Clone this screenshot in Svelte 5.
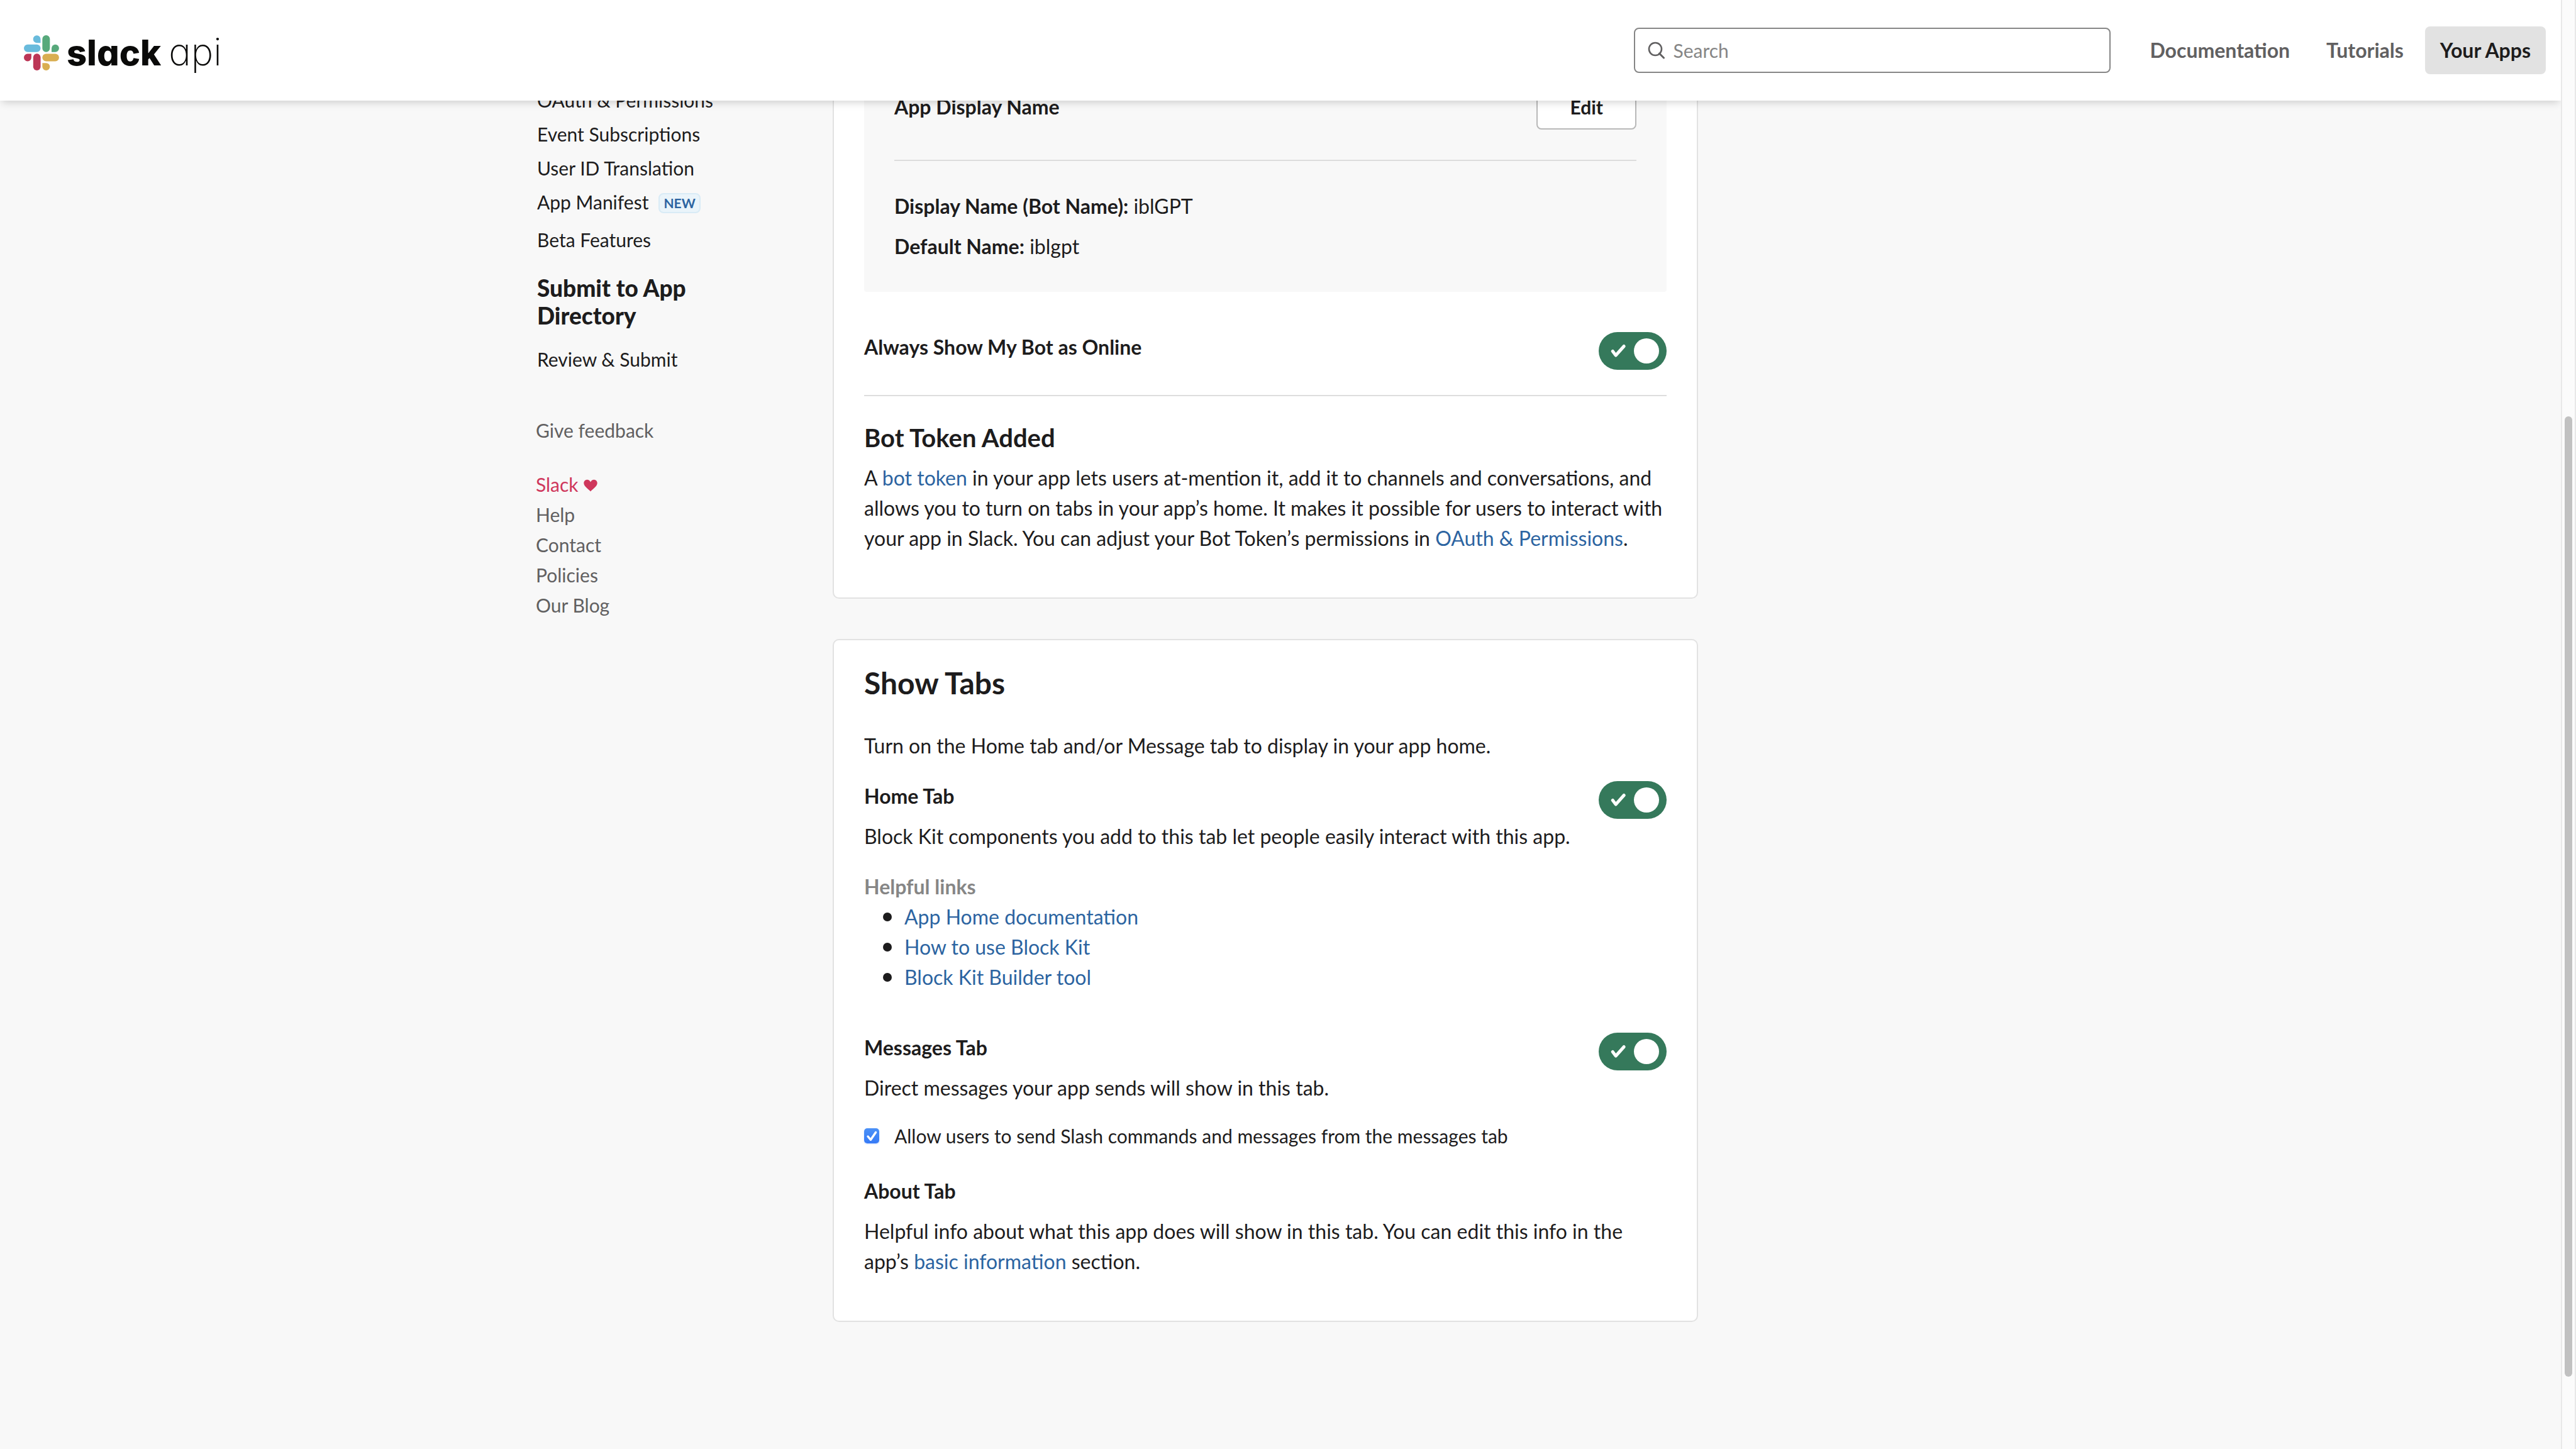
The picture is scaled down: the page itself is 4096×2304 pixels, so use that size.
<script>
  const navLinks = ['Documentation', 'Tutorials'];
  const featureLinks = [
    { label: 'OAuth & Permissions' },
    { label: 'Event Subscriptions' },
    { label: 'User ID Translation' },
    { label: 'App Manifest', badge: 'NEW' },
    { label: 'Beta Features' }
  ];
  const footerLinks = ['Help', 'Contact', 'Policies', 'Our Blog'];
  const helpfulLinks = ['App Home documentation', 'How to use Block Kit', 'Block Kit Builder tool'];

  let query = $state('');
  let online = $state(true);
  let homeTab = $state(true);
  let messagesTab = $state(true);
  let allowMessages = $state(true);
</script>

{#snippet toggleMark()}
  <svg class="toggle-mark" viewBox="0 0 108 60" aria-hidden="true">
    <path d="M22.3 30.5 27.2 37 40.2 22.5" fill="none" stroke="#fff" stroke-width="5" stroke-linecap="round" stroke-linejoin="round" />
    <circle cx="76" cy="30" r="20" fill="#fff" />
  </svg>
{/snippet}

<div class="window">
  <div class="page">
    <header class="topbar">
      <a class="logo" href="#home" aria-label="slack api">
        <svg class="mark" viewBox="145 212 208 208" aria-hidden="true">
          <g fill="#69bbdc">
            <path d="M243.500 257.500H222a22 22.500 0 1 1 21.500-22.500z" />
            <rect x="145" y="267" width="98.500" height="44.500" rx="22" />
          </g>
          <g fill="#57a97b">
            <rect x="254" y="212" width="44.500" height="99.500" rx="22" />
            <path d="M308.500 311.500V289a22 22.250 0 1 1 22 22.500z" />
          </g>
          <g fill="#bc3656">
            <path d="M189 321.500V344a22 22.250 0 1 1-22-22.500z" />
            <rect x="200" y="321" width="43.500" height="99" rx="21.750" />
          </g>
          <g fill="#d9ae50">
            <rect x="254" y="321.500" width="98.500" height="44.500" rx="22" />
            <path d="M254 376H276a22.250 22 0 1 1-22 22z" />
          </g>
        </svg>
        <span class="wordmark">
          <span class="brand">slack</span>
          <span class="product">api</span>
        </span>
      </a>

      <label class="search">
        <svg class="search-icon" viewBox="0 0 28 28" aria-hidden="true">
          <circle cx="12" cy="12" r="10" fill="none" stroke="#616061" stroke-width="2.600" />
          <path d="M18.500 19 25.500 26" stroke="#616061" stroke-width="3" stroke-linecap="round" />
        </svg>
        <input type="search" placeholder="Search" aria-label="Search" bind:value={query} />
      </label>

      <nav class="topnav" aria-label="Main">
        {#each navLinks as link}
          <a href="#{link}">{link}</a>
        {/each}
        <a class="current" href="#apps">Your Apps</a>
      </nav>
    </header>

    <div class="content">
      <aside class="sidebar">
        <ul class="features">
          {#each featureLinks as item}
            <li class:tall={item.badge}>
              <a href="#{item.label}">{item.label}</a>
              {#if item.badge}<span class="badge">{item.badge}</span>{/if}
            </li>
          {/each}
        </ul>
        <h2>Submit to App Directory</h2>
        <ul class="features">
          <li><a href="#review">Review &amp; Submit</a></li>
        </ul>
        <a class="minor feedback" href="#feedback">Give feedback</a>
        <a class="minor love" href="#slack">
          Slack
          <svg class="heart" viewBox="0 0 22 20" aria-hidden="true">
            <path d="M11 19.500C9 16.500.3 11.500.3 6.200.3 2.900 2.800.8 5.600.8 8 .8 10 2.200 11 4.600 12 2.200 14 .8 16.400.8c2.800 0 5.300 2.100 5.300 5.400C21.700 11.500 13 16.500 11 19.500z" fill="currentColor" />
          </svg>
        </a>
        {#each footerLinks as link}
          <a class="minor" href="#{link}">{link}</a>
        {/each}
      </aside>

      <main>
        <section class="card identity">
          <div class="panel">
            <div class="row middle">
              <h4>App Display Name</h4>
              <button type="button" class="edit">Edit</button>
            </div>
            <hr class="wide" />
            <p><strong>Display Name (Bot Name):</strong> iblGPT</p>
            <p class="next"><strong>Default Name:</strong> iblgpt</p>
          </div>
          <div class="row online">
            <h4><label for="online">Always Show My Bot as Online</label></h4>
            <span class="toggle">
              <input id="online" type="checkbox" role="switch" bind:checked={online} />
              {@render toggleMark()}
            </span>
          </div>
          <hr />
          <h3>Bot Token Added</h3>
          <p class="next">
            A <a href="#bot-token">bot token</a> in your app lets users at-mention it, add it to channels and
            conversations, and allows you to turn on tabs in your app’s home. It makes it possible for users to
            interact with your app in Slack. You can adjust your Bot Token’s permissions in
            <a href="#oauth">OAuth &amp; Permissions</a>.
          </p>
        </section>

        <section class="card tabs">
          <h2>Show Tabs</h2>
          <p>Turn on the Home tab and/or Message tab to display in your app home.</p>

          <div class="row home">
            <div>
              <h4><label for="home-tab">Home Tab</label></h4>
              <p class="next">Block Kit components you add to this tab let people easily interact with this app.</p>
            </div>
            <span class="toggle">
              <input id="home-tab" type="checkbox" role="switch" bind:checked={homeTab} />
              {@render toggleMark()}
            </span>
          </div>
          <h4 class="helpful">Helpful links</h4>
          <ul class="links">
            {#each helpfulLinks as link}
              <li><a href="#{link}">{link}</a></li>
            {/each}
          </ul>

          <div class="row messages">
            <div>
              <h4><label for="messages-tab">Messages Tab</label></h4>
              <p class="next">Direct messages your app sends will show in this tab.</p>
            </div>
            <span class="toggle">
              <input id="messages-tab" type="checkbox" role="switch" bind:checked={messagesTab} />
              {@render toggleMark()}
            </span>
          </div>
          <label class="allow">
            <span class="tick">
              <input type="checkbox" bind:checked={allowMessages} />
              <svg viewBox="0 0 24 24" aria-hidden="true">
                <path d="M6 13 10.500 18.300 18.500 6.500" fill="none" stroke="#fff" stroke-width="3.400" stroke-linecap="round" stroke-linejoin="round" />
              </svg>
            </span>
            Allow users to send Slash commands and messages from the messages tab
          </label>

          <h4 class="about">About Tab</h4>
          <p class="next">
            Helpful info about what this app does will show in this tab. You can edit this info in the app’s
            <a href="#basic">basic information</a> section.
          </p>
        </section>
      </main>
    </div>
  </div>

  <div class="scrollbar" aria-hidden="true"><div class="thumb"></div></div>
</div>

<style>
  :global(body) {
    margin: 0;
    background: #f8f8f8;
  }

  .window {
    display: flex;
    height: 100vh;
    overflow: hidden;
    color: #1d1c1d;
    font-family: Lato, "Liberation Sans", sans-serif;
    font-size: 32px;
    line-height: 48px;
  }

  .page {
    flex: 1;
    min-width: 0;
    overflow: hidden;
  }

  h2, h3, h4, p, ul {
    margin: 0;
    padding: 0;
  }

  a {
    color: #2c64a1;
    text-decoration: none;
  }

  /* Top bar */
  .topbar {
    position: relative;
    z-index: 1;
    display: flex;
    align-items: center;
    box-sizing: border-box;
    height: 160px;
    padding: 0 24px 0 38px;
    background: #fff;
    box-shadow: 0 6px 12px -3px rgba(0, 0, 0, 0.17);
  }

  .logo {
    display: flex;
    align-items: flex-start;
    gap: 12px;
    margin-right: auto;
    padding-top: 8px;
    color: #0a0a09;
    font-family: Inter, "Liberation Sans", sans-serif;
    font-feature-settings: "cv11";
    line-height: 52px;
  }

  .mark {
    width: 56px;
    height: 56px;
  }

  .wordmark {
    display: flex;
    align-items: baseline;
    gap: 12px;
  }

  .brand {
    font-size: 56px;
    font-weight: 800;
  }

  .product {
    font-size: 60px;
    font-weight: 200;
  }

  .search {
    display: flex;
    align-items: center;
    gap: 12px;
    box-sizing: border-box;
    width: 758px;
    height: 72px;
    margin-right: 38px;
    padding: 0 20px;
    border: 2px solid #868686;
    border-radius: 8px;
  }

  .search-icon {
    flex: none;
    width: 28px;
    height: 28px;
  }

  .search input {
    flex: 1;
    min-width: 0;
    padding: 0;
    border: 0;
    outline: 0;
    background: none;
    color: #1d1c1d;
    font: 30px/48px Lato, "Liberation Sans", sans-serif;
  }

  .search input::placeholder {
    color: #868686;
    opacity: 1;
  }

  .topnav {
    display: flex;
    gap: 10px;
  }

  .topnav a {
    padding: 14px 24px;
    border-radius: 8px;
    color: #616061;
    font-weight: 700;
  }

  .topnav .current {
    background: #e2e2e2;
    color: #1d1c1d;
  }

  /* Content grid, scrolled partly beneath the top bar */
  .content {
    display: grid;
    grid-template-columns: 376px minmax(0, 1376px);
    column-gap: 96px;
    align-items: start;
    max-width: 2368px;
    margin: -60px auto 0;
  }

  .sidebar {
    display: flex;
    flex-direction: column;
    align-items: flex-start;
    padding-top: 32px;
    font-size: 30px;
  }

  .features,
  .sidebar h2 {
    padding-left: 2px;
  }

  .features {
    list-style: none;
    line-height: 54px;
  }

  .features li {
    display: flex;
    gap: 16px;
    height: 54px;
  }

  .features .tall {
    height: 60px;
  }

  .features a {
    color: #1d1c1d;
  }

  .badge {
    box-sizing: border-box;
    height: 32px;
    margin-top: 13px;
    padding: 0 6px;
    border: 2px solid #d9ebf6;
    border-radius: 8px;
    background: #eaf4fa;
    color: #2c64a1;
    font-size: 21px;
    font-weight: 700;
    line-height: 28px;
  }

  .sidebar h2 {
    width: 300px;
    margin: 28px 0 20px;
    font-size: 37px;
    font-weight: 900;
    line-height: 44px;
  }

  .minor {
    display: flex;
    align-items: center;
    gap: 8px;
    color: #616061;
  }

  .feedback {
    margin: 62px 0 38px;
  }

  .love {
    color: #cf375c;
  }

  .heart {
    width: 22px;
    height: 20px;
    margin-top: 4px;
  }

  /* Cards */
  .card {
    padding: 40px 48px 70px;
    border: 2px solid #e2e2e2;
    border-radius: 10px;
    background: #fff;
  }

  .identity {
    padding-top: 0;
  }

  .tabs {
    margin-top: 64px;
  }

  .card h2 {
    margin-bottom: 48px;
    font-size: 48px;
    font-weight: 700;
    line-height: 56px;
  }

  h3 {
    font-size: 40px;
    font-weight: 700;
  }

  h4 {
    font-size: 32px;
    font-weight: 700;
  }

  .next {
    margin-top: 16px;
  }

  .panel {
    padding: 32px 48px 48px;
    border-radius: 4px;
    background: #f8f8f8;
  }

  hr {
    height: 2px;
    margin: 40px 0 42px;
    border: 0;
    background: #dddddd;
  }

  hr.wide {
    margin: 48px 0;
  }

  .row {
    display: flex;
    justify-content: space-between;
    align-items: flex-start;
  }

  .middle {
    align-items: center;
  }

  .edit {
    height: 72px;
    padding: 0 51px;
    border: 2px solid #b8b8b8;
    border-radius: 8px;
    background: #fff;
    color: #1d1c1d;
    font: 700 30px/36px Lato, "Liberation Sans", sans-serif;
  }

  .online {
    margin-top: 64px;
  }

  .home {
    margin-top: 32px;
  }

  .messages {
    margin-top: 64px;
  }

  .toggle,
  .tick {
    display: grid;
    flex: none;
  }

  .toggle > :global(*),
  .tick > :global(*) {
    grid-area: 1 / 1;
  }

  .toggle input {
    width: 108px;
    height: 60px;
    margin: 0;
    border-radius: 30px;
    appearance: none;
    background: #35795b;
  }

  .toggle-mark {
    width: 108px;
    height: 60px;
    pointer-events: none;
  }

  .helpful {
    margin-top: 32px;
    color: #868686;
  }

  .links {
    list-style: none;
  }

  .links li {
    display: flex;
    align-items: center;
    gap: 20px;
    padding-left: 30px;
  }

  .links li::before {
    width: 14px;
    height: 14px;
    border-radius: 50%;
    background: #1d1c1d;
    content: "";
  }

  .allow {
    display: flex;
    align-items: center;
    gap: 24px;
    margin-top: 28px;
    font-size: 30px;
    line-height: 48px;
  }

  .tick input {
    width: 24px;
    height: 24px;
    margin: 0;
    border-radius: 5px;
    appearance: none;
    background: linear-gradient(#4b91f7, #367af6);
    box-shadow: 0 1px 2px rgba(54, 122, 246, 0.35);
  }

  .tick svg {
    width: 24px;
    height: 24px;
    pointer-events: none;
  }

  .about {
    margin-top: 40px;
  }

  /* Scrollbar */
  .scrollbar {
    box-sizing: border-box;
    flex: none;
    width: 24px;
    padding: 662px 4px 115px;
    border: solid #e8e8e8;
    border-width: 0 2px;
    background: #fbfbfb;
  }

  .thumb {
    height: 100%;
    border-radius: 6px;
    background: #c1c1c1;
  }
</style>
